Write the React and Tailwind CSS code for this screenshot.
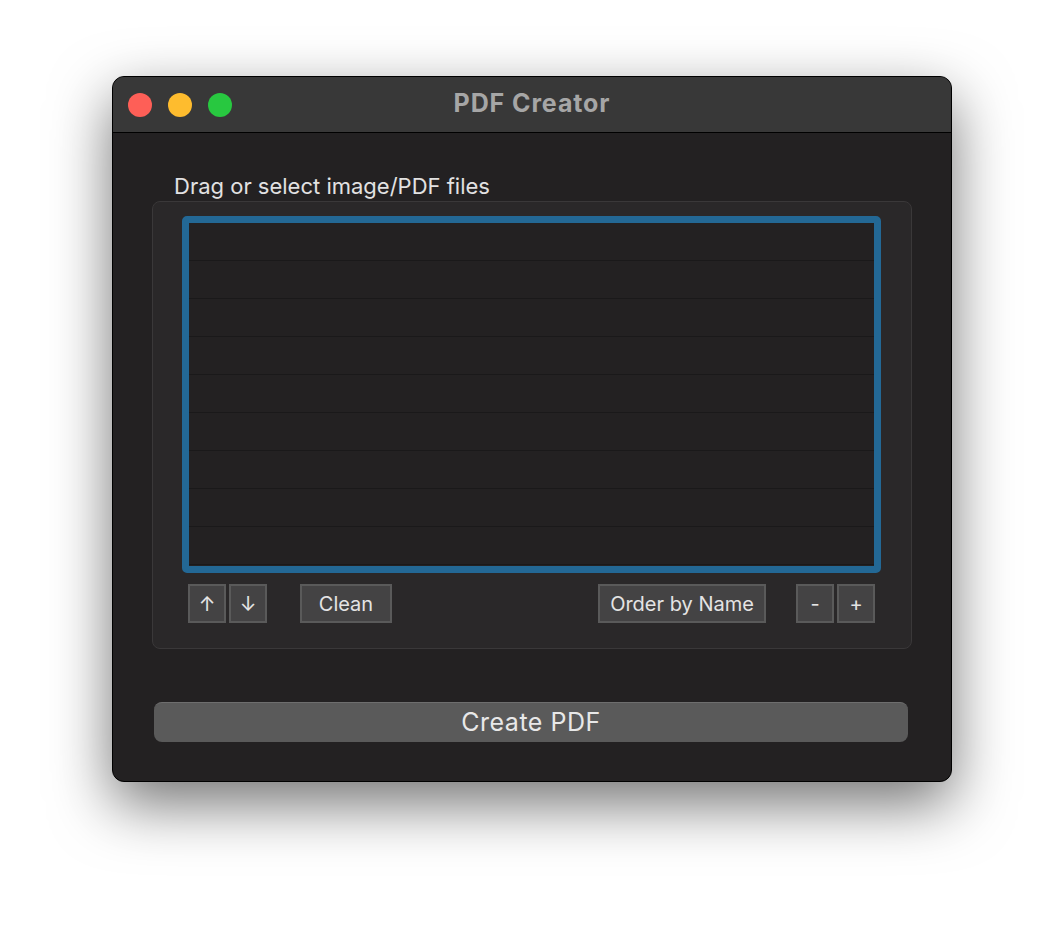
import React from 'react';

const font = { fontFamily: 'Inter, "Liberation Sans", sans-serif' };

function SmallButton({ children, className = '' }) {
  return (
    <button
      className={`h-[39px] flex items-center justify-center border-2 border-[#5a5a5a] bg-[#444344] text-[#e4e4e4] text-[20px] leading-none ${className}`}
    >
      {children}
    </button>
  );
}

export default function App() {
  const rows = Array.from({ length: 9 });
  return (
    <div className="w-[1064px] h-[930px] bg-white relative overflow-hidden" style={font}>
      <div className="absolute left-[112px] top-[76px] w-[840px] h-[706px] rounded-[12px] border border-black bg-[#232122] overflow-hidden shadow-[0_22px_60px_rgba(0,0,0,0.55)] flex flex-col">
        {/* title bar */}
        <div className="h-[56px] shrink-0 bg-[#383838] border-b border-black flex items-center relative">
          <div className="flex items-center gap-[16px] pl-[15px]">
            <span className="w-[24px] h-[24px] rounded-full bg-[#fe5f57]" />
            <span className="w-[24px] h-[24px] rounded-full bg-[#febc2e]" />
            <span className="w-[24px] h-[24px] rounded-full bg-[#28c840]" />
          </div>
          <div className="absolute inset-0 flex items-center justify-center pointer-events-none">
            <span className="text-[25px] font-bold text-[#a6a6a6] tracking-[0.9px] -mt-[2px]">PDF Creator</span>
          </div>
        </div>

        {/* content */}
        <div className="flex-1 flex flex-col">
          <div className="mt-[41px] ml-[61px] h-[24px] leading-[24px] text-[22px] text-[#e2e2e2]">
            Drag or select image/PDF files
          </div>

          <div className="mt-[3px] mx-[39px] h-[448px] rounded-[8px] border border-[#3a3839] bg-[#2a2829] pl-[29px] pt-[14px]">
            <div className="w-[699px] h-[357px] rounded-[5px] border-[7px] border-[#236895] bg-[#232122] overflow-hidden">
              {rows.map((_, i) => (
                <div key={i} className="h-[38px] border-b border-[#1a191a]" />
              ))}
            </div>

            <div className="mt-[11px] flex items-center">
              <div className="ml-[6px] flex gap-[3px]">
                <SmallButton className="w-[38px] text-[18px]">↑</SmallButton>
                <SmallButton className="w-[38px] text-[18px]">↓</SmallButton>
              </div>
              <SmallButton className="ml-[33px] w-[92px]">Clean</SmallButton>
              <SmallButton className="ml-[206px] w-[168px]">Order by Name</SmallButton>
              <div className="ml-[30px] flex gap-[3px]">
                <SmallButton className="w-[38px] text-[18px]">-</SmallButton>
                <SmallButton className="w-[38px] text-[18px]">+</SmallButton>
              </div>
            </div>
          </div>

          <button className="mt-[53px] ml-[41px] w-[754px] h-[40px] rounded-[8px] bg-[#5a5a5a] border-t border-[#6e6e6e] text-[25px] tracking-[0.5px] text-[#e8e8e8] flex items-center justify-center">
            Create PDF
          </button>
        </div>
      </div>
    </div>
  );
}
